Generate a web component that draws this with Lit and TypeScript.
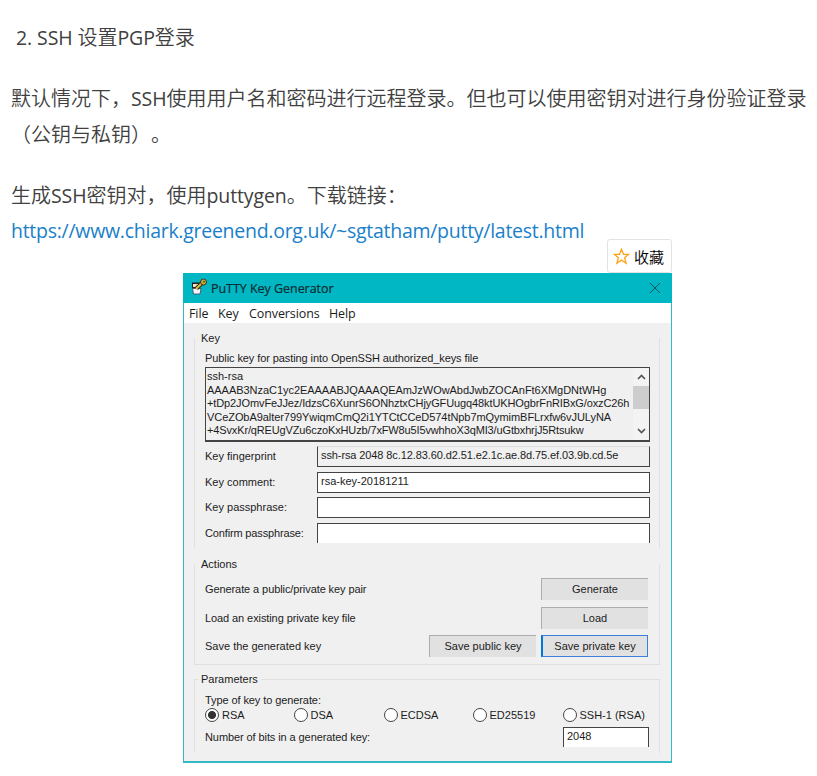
import { LitElement, html, css } from "lit";
import { customElement, property } from "lit/decorators.js";

@customElement("putty-window")
class PuttyWindow extends LitElement {
  @property({ type: Array }) keyLines: string[] = [
    "ssh-rsa",
    "AAAAB3NzaC1yc2EAAAABJQAAAQEAmJzWOwAbdJwbZOCAnFt6XMgDNtWHg",
    "+tDp2JOmvFeJJez/IdzsC6XunrS6ONhztxCHjyGFUugq48ktUKHOgbrFnRIBxG/oxzC26h",
    "VCeZObA9alter799YwiqmCmQ2i1YTCtCCeD574tNpb7mQymimBFLrxfw6vJULyNA",
    "+4SvxKr/qREUgVZu6czoKxHUzb/7xFW8u5I5vwhhoX3qMI3/uGtbxhrjJ5Rtsukw",
  ];

  static styles = css`
    :host {
      display: block;
      width: 489px;
      height: 490px;
      font: 11px/14px "Liberation Sans", Arial, sans-serif;
      color: #1c1c1c;
    }
    * { box-sizing: border-box; }
    .window {
      height: 490px;
      background: #f0f0f0;
      border: solid #35b9c4;
      border-width: 0 1px 2px 1px;
      white-space: nowrap;
    }
    .title {
      display: flex;
      align-items: center;
      height: 30px;
      margin: 0 -1px;
      padding: 0 11px 0 7px;
      background: #00b7c3;
      font: 12.5px/20px "Open Sans", sans-serif;
      color: #0c2c31;
    }
    .title .logo { width: 18px; height: 18px; margin-right: 3px; margin-top: -2px; }
    .title .name { flex: 1; padding-top: 2px; letter-spacing: -0.04px; -webkit-text-stroke: 0.2px #0c2c31; }
    .menu {
      display: flex;
      height: 20px;
      padding-left: 5px;
      background: #fff;
      font: 12.5px/22px "Open Sans", sans-serif;
      letter-spacing: -0.1px;
    }
    .menu .file { width: 29px; }
    .menu .key { width: 31px; }
    .menu .conv { width: 80px; }
    .group { position: relative; margin: 0 11px 0 10px; border: 1px solid #e0e0e0; }
    .legend {
      position: absolute;
      left: 3px;
      top: -8px;
      padding: 0 3px;
      background: #f0f0f0;
    }
    .keys { margin-top: 15px; height: 210px; border-top-color: transparent; border-bottom: 0; padding: 12px 9px 0 10px; }
    .actions { margin-top: 16px; height: 101px; border-top-color: transparent; padding: 13px 11px 0 10px; }
    .params { margin-top: 14px; height: 74px; border-bottom: 0; padding: 13px 10px 0 10px; }
    .area {
      display: flex;
      width: 445px;
      height: 75px;
      margin-top: 2px;
      border: 1px solid #444;
      border-width: 1px 1px 2px 1px;
    }
    .lines { width: 427px; padding: 2px 0 0 1px; line-height: 13.6px; }
    .pub { letter-spacing: -0.09px; }
    .k1 { letter-spacing: -0.04px; }
    .k2 { letter-spacing: -0.11px; }
    .k3 { letter-spacing: -0.06px; }
    .k4 { letter-spacing: -0.14px; }
    .fpv { letter-spacing: -0.1px; }
    .f4 { letter-spacing: -0.15px; }
    .a1, .a2, .p1, .p2 { letter-spacing: -0.09px; }
    .bar {
      display: flex;
      flex-direction: column;
      align-items: center;
      width: 16px;
      background: #f3f3f3;
    }
    .bar svg { width: 9px; height: 18px; flex: none; }
    .thumb { width: 16px; height: 24px; background: #cdcdcd; margin-bottom: 13px; }
    .fields { display: grid; grid-template-columns: 112px 333px; margin-top: 4px; }
    .fields .lab { line-height: 21px; }
    .input { background: #fff; border: 1px solid #444; height: 21px; padding-left: 3px; line-height: 17px; margin-bottom: 5px; }
    .fp { background: #f0f0f0; border-top-color: #ddd; }
    .comment { margin-bottom: 4px; }
    .open { border-bottom: 0; height: 20px; }
    .row { display: flex; align-items: center; height: 22px; margin-bottom: 6.5px; }
    .row .txt { flex: 1; }
    .btn {
      width: 107px;
      height: 22px;
      background: #e1e1e1;
      border-top: 1px solid #adadad;
      border-left: 1px solid #adadad;
      text-align: center;
      line-height: 21px;
      margin-left: 5px;
    }
    .focus { border: 1px solid #3b80dc; border-left: 2px solid #0078d7; line-height: 20px; }
    .radios { display: grid; grid-template-columns: 88.5px 90px 89px 90px auto; height: 15px; }
    .radio { display: flex; align-items: center; gap: 3px; }
    .dot { width: 14px; height: 14px; border-radius: 50%; background: #fff; border: 1px solid #444; flex: none; }
    .dot.on { background: radial-gradient(circle, #333 0 3.6px, #fff 4.4px); }
    .bits { display: flex; justify-content: space-between; margin-top: 5px; }
    .bits .lab { line-height: 21px; }
    .bits .input { width: 86px; }
  `;

  private radio(label: string, on = false) {
    return html`<div class="radio"><span class="dot ${on ? "on" : ""}"></span><span>${label}</span></div>`;
  }

  render() {
    return html`
      <div class="window">
        <div class="title">
          <svg class="logo" viewBox="0 0 18 18">
            <path d="M2 4.500h8v6H2z" fill="#222" />
            <path d="M3 6h5v3H3z" fill="#e8e6c8" />
            <path d="M2.500 10.500h8.500l-1 5.500H3.500z" fill="#f4f4ff" stroke="#345" stroke-width=".8" />
            <path d="M6.500 10.500l6-6" stroke="#333018" stroke-width="4" />
            <path d="M6 11l7-7" stroke="#d9bd3c" stroke-width="2" />
            <circle cx="13.500" cy="4" r="3" fill="#c8ae3d" stroke="#3a3719" />
            <circle cx="14" cy="3.700" r=".9" fill="#263" />
          </svg>
          <span class="name">PuTTY Key Generator</span>
          <svg width="12" height="12" viewBox="0 0 12 12"><path d="M1 1l10 10M11 1L1 11" stroke="#14525a" fill="none" /></svg>
        </div>
        <div class="menu">
          <span class="file">File</span><span class="key">Key</span><span class="conv">Conversions</span><span>Help</span>
        </div>
        <div class="group keys">
          <span class="legend">Key</span>
          <div><span class="pub">Public key for pasting into OpenSSH authorized_keys file</span></div>
          <div class="area">
            <div class="lines">${this.keyLines.map((l, i) => html`<div><span class="k${i}">${l}</span></div>`)}</div>
            <div class="bar">
              <svg viewBox="0 0 9 18"><path d="M1 11l3.500-3.500L8 11" fill="none" stroke="#555" stroke-width="1.7" /></svg>
              <div class="thumb"></div>
              <svg viewBox="0 0 9 18"><path d="M1 7l3.500 3.500L8 7" fill="none" stroke="#555" stroke-width="1.7" /></svg>
            </div>
          </div>
          <div class="fields">
            <div class="lab">Key fingerprint</div>
            <div class="input fp"><span class="fpv">ssh-rsa 2048 8c.12.83.60.d2.51.e2.1c.ae.8d.75.ef.03.9b.cd.5e</span></div>
            <div class="lab">Key comment:</div>
            <div class="input comment">rsa-key-20181211</div>
            <div class="lab">Key passphrase:</div>
            <div class="input"></div>
            <div class="lab"><span class="f4">Confirm passphrase:</span></div>
            <div class="input open"></div>
          </div>
        </div>
        <div class="group actions">
          <span class="legend">Actions</span>
          <div class="row"><span class="txt a1">Generate a public/private key pair</span><div class="btn">Generate</div></div>
          <div class="row"><span class="txt a2">Load an existing private key file</span><div class="btn">Load</div></div>
          <div class="row">
            <span class="txt">Save the generated key</span>
            <div class="btn">Save public key</div><div class="btn focus">Save private key</div>
          </div>
        </div>
        <div class="group params">
          <span class="legend">Parameters</span>
          <div><span class="p1">Type of key to generate:</span></div>
          <div class="radios">
            ${this.radio("RSA", true)}${this.radio("DSA")}${this.radio("ECDSA")}${this.radio("ED25519")}${this.radio("SSH-1 (RSA)")}
          </div>
          <div class="bits">
            <div class="lab"><span class="p2">Number of bits in a generated key:</span></div>
            <div class="input open">2048</div>
          </div>
        </div>
      </div>
    `;
  }
}

@customElement("app-root")
class AppRoot extends LitElement {
  static styles = css`
    :host {
      display: block;
      width: 817px;
      height: 776px;
      overflow: hidden;
      background: #fff;
      color: #404040;
      font: 350 20px/36px "Open Sans", "Noto Sans CJK SC", sans-serif;
      text-spacing-trim: space-all;
    }
    .article { padding: 20px 0 0 11px; white-space: nowrap; }
    p { margin: 0 0 25px; }
    .item { padding-left: 5px; }
    .en { font-weight: 400; font-size: 19.5px; letter-spacing: -0.1px; }
    .last { margin: 0; }
    a {
      display: block;
      margin-top: -1px;
      color: #1a7fc9;
      text-decoration: none;
      font-weight: 400;
      font-size: 19.5px;
      letter-spacing: -0.27px;
    }
    .figure { position: relative; margin: 24px 0 0 172px; width: 489px; }
    .fav {
      position: absolute;
      right: 0;
      top: -34px;
      display: flex;
      align-items: center;
      gap: 4px;
      box-sizing: border-box;
      width: 65px;
      height: 34px;
      padding-left: 5px;
      border: 1px solid #e3e3e3;
      border-radius: 3px;
      background: #fff;
      color: #000;
      font: 350 15px/33px "Noto Sans CJK SC", sans-serif;
    }
    .fav svg { width: 17px; height: 17px; }
  `;

  render() {
    return html`
      <div class="article">
        <p class="item"><span class="en">2. SSH </span>设置<span class="en">PGP</span>登录</p>
        <p>默认情况下，<span class="en">SSH</span>使用用户名和密码进行远程登录。但也可以使用密钥对进行身份验证登录<br />（公钥与私钥）。</p>
        <p class="last">生成<span class="en">SSH</span>密钥对，使用<span class="en">puttygen</span>。下载链接：<a>https://www.chiark.greenend.org.uk/~sgtatham/putty/latest.html</a></p>
        <div class="figure">
          <putty-window></putty-window>
          <div class="fav">
            <svg viewBox="0 0 17 17"><path d="M8.500 1.300l2 5h5.200l-4.100 3.400 1.500 5.500-4.600-3.100-4.600 3.100 1.500-5.500L1.300 6.300h5.200z" fill="none" stroke="#ffa31a" stroke-width="1.300" /></svg>
            <span>收藏</span>
          </div>
        </div>
      </div>
    `;
  }
}
